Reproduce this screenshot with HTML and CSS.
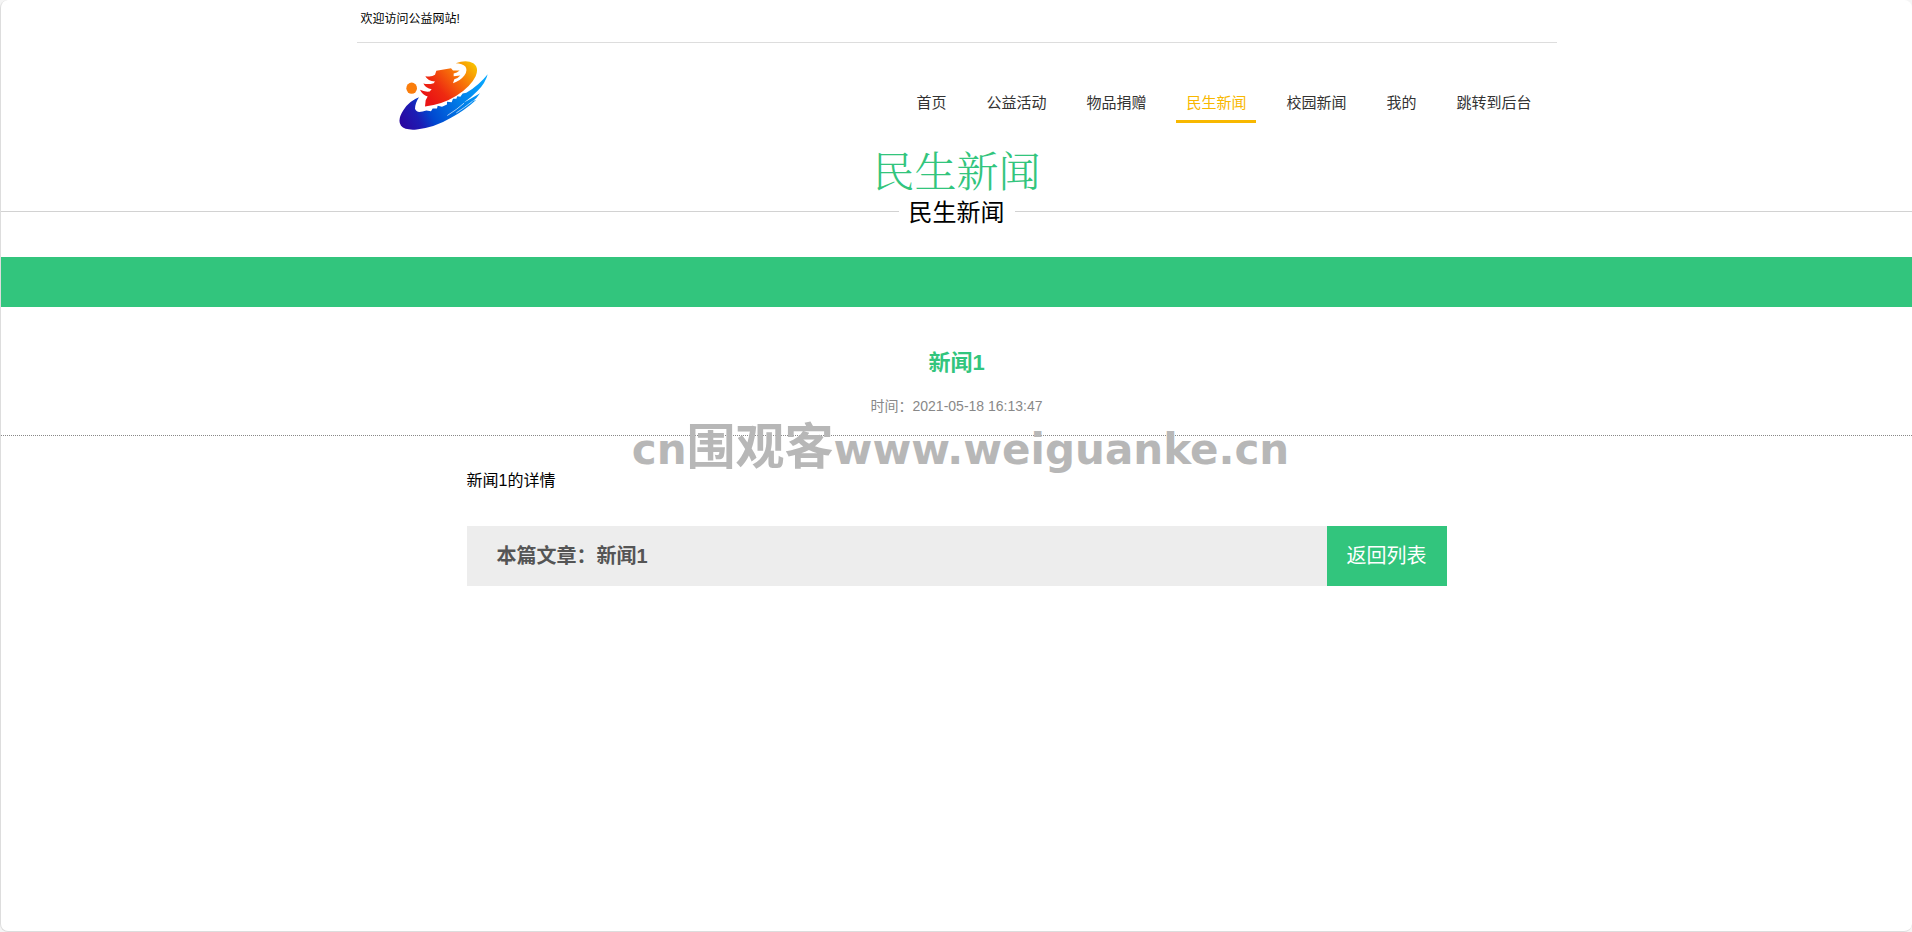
FILE: index.html
```html
<!DOCTYPE html>
<html lang="zh-CN">
<head>
<meta charset="UTF-8" />
<meta name="viewport" content="width=device-width, initial-scale=1" />
<title>民生新闻</title>
<link rel="stylesheet" href="styles.css">
</head>
<body>
<div class="page">

  <header class="container">
    <div class="top-bar">欢迎访问公益网站!</div>
    <div class="head-main">
      <a class="logo" href="#" aria-label="首页">
        <svg width="90" height="71" viewBox="178 180 270 212">
          <defs>
            <linearGradient id="blue" gradientUnits="userSpaceOnUse" x1="185" y1="370" x2="440" y2="240">
              <stop offset="0" stop-color="#2a08a0" />
              <stop offset="0.18" stop-color="#1c1cb4" />
              <stop offset="0.32" stop-color="#0048d0" />
              <stop offset="0.65" stop-color="#007ee8" />
              <stop offset="1" stop-color="#08a8ff" />
            </linearGradient>
            <linearGradient id="fire" gradientUnits="userSpaceOnUse" x1="275" y1="305" x2="405" y2="190">
              <stop offset="0" stop-color="#ea1414" />
              <stop offset="0.25" stop-color="#ee2a10" />
              <stop offset="0.65" stop-color="#f87808" />
              <stop offset="1" stop-color="#f8c400" />
            </linearGradient>
          </defs>
          <ellipse cx="216" cy="264" rx="16" ry="17" fill="#fa7d0c" />
          <path fill="url(#fire)" d="M290 212 L334 204 L340 211 L360 211 Q352 218 342 220 L342 228 L362 226 Q356 234 344 237 L340 249 Q362 242 374 226 Q385 211 377 199 Q369 190 348 189 Q380 178 401 189 Q419 202 408 228 Q394 258 350 287 Q309 313 256 319 L258 300 L264 289 Q248 285 241 269 Q254 276 270 274 L276 267 Q258 264 251 250 Q266 254 282 249 L286 244 Q264 242 257 228 Q276 232 286 224 Z" />
          <path fill="url(#blue)" d="M238 291 Q226 309 226 326 Q230 339 249 334 L260 331 L274 333 L279 325 L292 325 L294 317 L307 320 L322 313 L322 305 L336 306 L340 296 L350 296 L353 288 L362 290 L369 280 L380 278 Q420 253 444 222 Q438 247 414 272 Q394 293 372 308 Q397 293 421 279 Q411 295 399 303 L410 299 Q375 331 334 353 Q286 382 231 388 Q196 391 184 377 Q172 359 191 330 Q208 302 238 291 Z" />
          <path fill="none" stroke="#fff" stroke-width="2" d="M323 346 Q352 328 373 309 M350 338 Q374 323 399 303" />
        </svg>
      </a>
      <nav class="nav">
        <a href="#">首页</a>
        <a href="#">公益活动</a>
        <a href="#">物品捐赠</a>
        <a href="#" class="active">民生新闻</a>
        <a href="#">校园新闻</a>
        <a href="#">我的</a>
        <a href="#">跳转到后台</a>
      </nav>
    </div>
  </header>

  <h1 class="title">民生新闻</h1>
  <div class="sub-title">民生新闻</div>
  <div class="banner"></div>

  <main>
    <h2 class="news-title">新闻1</h2>
    <p class="news-time">时间：2021-05-18 16:13:47</p>
    <div class="news-body">
      <p class="news-text">新闻1的详情</p>
      <div class="news-foot">
        <strong>本篇文章：新闻1</strong>
        <a href="#" class="back-btn">返回列表</a>
      </div>
    </div>
  </main>

  <div class="watermark">cn<span>围观客</span>www.weiguanke.cn</div>
</div>
</body>
</html>
```

FILE: styles.css
```css
* {
  box-sizing: border-box;
}
body {
  margin: 0;
  background: #f5f5f5;
  color: #000;
  font-family: "Liberation Sans", Arial, "Noto Sans CJK SC", sans-serif;
}
h1, h2, p {
  margin: 0;
}
a {
  text-decoration: none;
}
.page {
  position: relative;
  min-height: 100vh;
  background: #fff;
  border: 1px solid #ddd;
  border-width: 0 0 1px 1px;
  border-radius: 8px;
}
.container {
  max-width: 1200px;
  margin: 0 auto;
}
.top-bar {
  height: 43px;
  padding-left: 4px;
  border-bottom: 1px solid #ddd;
  font-size: 12px;
  line-height: 39px;
}
.head-main {
  display: flex;
  justify-content: space-between;
  align-items: flex-start;
  height: 98px;
  padding: 17px 15px 0 42px;
}
.logo svg {
  display: block;
}
.nav {
  display: flex;
  gap: 20px;
  padding-top: 26px;
}
.nav a {
  padding: 0 10px;
  border-bottom: 3px solid transparent;
  color: #333;
  font-size: 15px;
  line-height: 34px;
}
.nav a.active {
  color: #f8b800;
  border-color: #f8b800;
}
.title {
  color: #32c57d;
  font-family: "Noto Serif CJK SC", "Liberation Serif", "Noto Sans CJK SC", serif;
  font-size: 42px;
  font-weight: 300;
  line-height: 57px;
  text-align: center;
}
.sub-title {
  display: flex;
  align-items: center;
  gap: 10px;
  font-size: 24px;
  line-height: 29px;
}
.sub-title::before,
.sub-title::after {
  content: "";
  flex: 1;
  margin-bottom: 2px;
  border-top: 1px solid #d2d2d2;
}
.banner {
  height: 50px;
  margin-top: 30px;
  background: #32c57d;
}
.news-title {
  padding-top: 41px;
  color: #32c57d;
  font-size: 22px;
  line-height: 30px;
  text-align: center;
}
.news-time {
  padding: 17px 0 18px;
  border-bottom: 1px dotted #888;
  color: #888;
  font-size: 14px;
  line-height: 22px;
  text-align: center;
}
.news-body {
  max-width: 980px;
  margin: 0 auto;
  padding-top: 33px;
}
.news-text {
  font-size: 16px;
  line-height: 24px;
}
.news-foot {
  display: flex;
  justify-content: space-between;
  margin-top: 33px;
  padding-left: 30px;
  background: #ededed;
  color: #555;
  font-size: 20px;
  line-height: 60px;
}
.back-btn {
  padding: 0 20px;
  background: #32c57d;
  color: #fff;
}
.watermark {
  position: absolute;
  top: 418px;
  left: 0;
  width: 100%;
  padding-left: 8px;
  color: #b7b7b7;
  font-family: "DejaVu Sans", "Noto Sans CJK SC", sans-serif;
  font-size: 42px;
  font-weight: bold;
  line-height: 60px;
  text-align: center;
  pointer-events: none;
}
.watermark span {
  font-size: 49px;
}
```
